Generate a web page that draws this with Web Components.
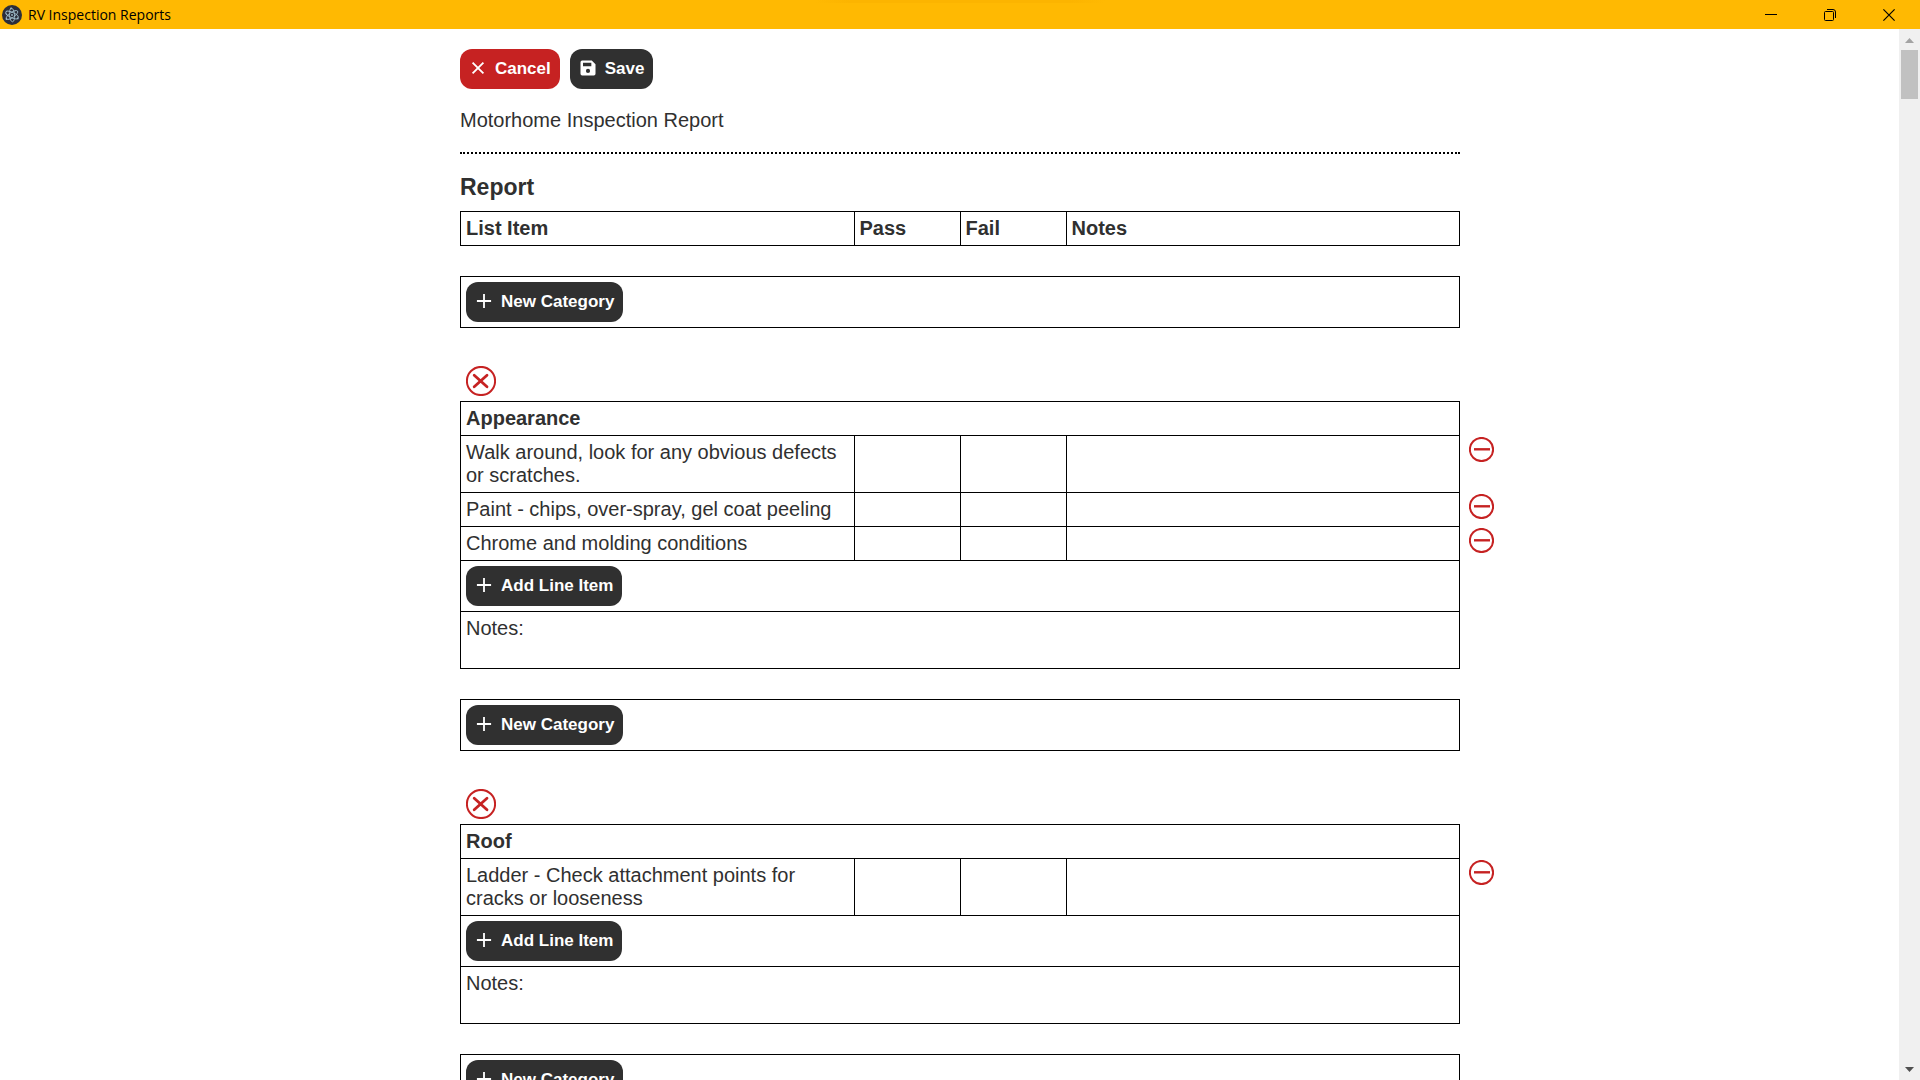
<!DOCTYPE html>
<html lang="en">
<head>
<meta charset="utf-8">
<title>RV Inspection Reports</title>
<style>
  html, body { height: 100%; margin: 0; }
  body { overflow: hidden; background: #fff; color: #303030; font: 20px/23px "Liberation Sans", Arial, sans-serif; }
</style>
</head>
<body>
<app-window>
  <title-bar slot="title">RV Inspection Reports</title-bar>
  <report-page name="Motorhome Inspection Report">
    <report-header></report-header>
    <new-category></new-category>
    <report-category name="Appearance" items="Walk around, look for any obvious defects or scratches.|Paint - chips, over-spray, gel coat peeling|Chrome and molding conditions"></report-category>
    <new-category></new-category>
    <report-category name="Roof" items="Ladder - Check attachment points for cracks or looseness"></report-category>
    <new-category></new-category>
  </report-page>
  <scroll-rail slot="rail"></scroll-rail>
</app-window>

<script>
const define = (name, render) => customElements.define(name, class extends HTMLElement {
  connectedCallback() {
    if (!this.shadowRoot) this.attachShadow({ mode: "open" }).innerHTML = render(this);
  }
});

const icons = {
  close: '<path d="M5.5 5.5l13 13M18.5 5.5l-13 13" fill="none" stroke="currentColor" stroke-width="2.2"/>',
  add: '<path d="M12 3.5v17M3.5 12h17" fill="none" stroke="currentColor" stroke-width="2.2"/>',
  save: '<path fill="currentColor" fill-rule="evenodd" d="M5 3h11.5L21 7.5V19a2 2 0 0 1-2 2H5a2 2 0 0 1-2-2V5a2 2 0 0 1 2-2zM6 5.6v4.2h10V5.6zM12 13a2.5 2.5 0 1 0 0 5 2.5 2.5 0 0 0 0-5z"/>'
};

const tableStyle = `
  table { border-collapse: collapse; table-layout: fixed; width: 100%; }
  th, td { border: 1px solid #000; padding: 5px; text-align: left; vertical-align: top; }
  .mark { width: 106px; }
`;

define("app-window", () => `
  <style>
    :host { display: grid; grid-template-rows: auto minmax(0, 1fr); height: 100vh; }
    .view { display: grid; grid-template-columns: 21px minmax(0, 1fr) 21px; min-height: 0; }
    main { grid-column: 2; min-height: 0; overflow: hidden; }
  </style>
  <slot name="title"></slot>
  <div class="view"><main><slot></slot></main><slot name="rail"></slot></div>`);

define("title-bar", () => `
  <style>
    :host { display: flex; align-items: center; height: 29px; padding: 0 2px; color: #000;
      background: linear-gradient(90deg, #ffb902, #fcb400 12%, #fcb400 88%, #ffb902) top center / 290px 3px no-repeat #ffb902;
      font: 14px/19px "Open Sans", sans-serif; }
    .logo { width: 20px; height: 20px; margin-right: 6px; }
    .name { flex: 1; }
    button { display: flex; justify-content: center; align-items: center; width: 59px; height: 29px; padding: 0; border: 0; background: none; color: inherit; }
  </style>
  <svg class="logo" viewBox="0 0 20 20" aria-hidden="true">
    <circle cx="10" cy="10" r="10" fill="#2b2e3a"/>
    <g fill="none" stroke="#9fbccb" stroke-width=".9">
      <ellipse cx="10" cy="10" rx="6.8" ry="2.6" transform="rotate(25 10 10)"/>
      <ellipse cx="10" cy="10" rx="6.8" ry="2.6" transform="rotate(85 10 10)"/>
      <ellipse cx="10" cy="10" rx="6.8" ry="2.6" transform="rotate(145 10 10)"/>
    </g>
    <g fill="#9fbccb"><circle cx="10" cy="10" r=".9"/><circle cx="4.5" cy="14" r=".9"/><circle cx="15.7" cy="13.4" r=".9"/><circle cx="9" cy="3.4" r=".9"/></g>
  </svg>
  <span class="name"><slot></slot></span>
  <button aria-label="Minimize"><svg width="12" height="12" viewBox="0 0 12 12"><path d="M0 5.5h12" stroke="#000"/></svg></button>
  <button aria-label="Restore"><svg width="12" height="12" viewBox="0 0 12 12" fill="none" stroke="#000"><rect x=".5" y="2.5" width="9" height="9" rx="1"/><path d="M3 .5h6a2.5 2.5 0 0 1 2.5 2.5v6"/></svg></button>
  <button aria-label="Close"><svg width="12" height="12" viewBox="0 0 12 12"><path d="M.4.4l11.2 11.2M11.6.4L.4 11.6" stroke="#000" stroke-width="1.2"/></svg></button>`);

define("scroll-rail", () => `
  <style>
    :host { display: flex; flex-direction: column; align-items: center; background: #f0f0f0; }
    svg { width: 21px; height: 21px; }
    .track { flex: 1; }
    .thumb { width: 17px; height: 49px; background: #c1c1c1; }
  </style>
  <svg viewBox="0 0 21 21" aria-hidden="true"><path d="M6 14l4.500-5 4.500 5z" fill="#a3a3a3"/></svg>
  <div class="track"><div class="thumb"></div></div>
  <svg viewBox="0 0 21 21" aria-hidden="true"><path d="M6 8l4.500 5 4.500-5z" fill="#505050"/></svg>`);

define("action-button", el => `
  <style>
    :host { display: block; }
    button { display: flex; align-items: center; gap: 7px; height: 40px; padding: 0 9px 0 8px; border: 0; border-radius: 12px;
      background: #303030; color: #fff; font: bold 17px/20px "Liberation Sans", Arial, sans-serif; white-space: nowrap; }
    :host([danger]) button { background: #c62222; }
    svg { width: 20px; height: 20px; margin-bottom: 2px; }
  </style>
  <button><svg viewBox="0 0 24 24" aria-hidden="true">${icons[el.getAttribute("icon")]}</svg><slot></slot></button>`);

define("remove-button", el => `
  <style>
    :host { display: block; }
    button { display: block; padding: 0; border: 0; background: none; }
    svg { display: block; fill: none; stroke: #c62222; stroke-width: 2; }
  </style>
  <button aria-label="Remove">${el.getAttribute("kind") === "category"
    ? '<svg width="30" height="30" viewBox="0 0 30 30"><circle cx="15" cy="15" r="14.1"/><path d="M8.200 9.200l12.800 11.600M21 9.200L8.200 20.800" stroke-width="2.800" stroke-linecap="round"/></svg>'
    : '<svg width="25" height="25" viewBox="0 0 25 25"><circle cx="12.500" cy="12.500" r="11.600"/><path d="M5 12.300h16" stroke-width="2.400"/></svg>'}</button>`);

define("report-page", el => `
  <style>
    :host { display: flex; flex-direction: column; width: 100%; max-width: 1000px; margin: 0 auto; padding-top: 20px; }
    .actions { display: flex; gap: 10px; }
    p { margin: 20px 0; }
    hr { width: 100%; margin: 0 0 20px; border: 0; border-top: 2px dotted #000; }
    h2 { margin: 0 0 10px; font-size: 23px; line-height: 27px; }
    .sections { display: flex; flex-direction: column; gap: 30px; }
  </style>
  <div class="actions">
    <action-button icon="close" danger>Cancel</action-button>
    <action-button icon="save">Save</action-button>
  </div>
  <p>${el.getAttribute("name")}</p>
  <hr>
  <h2>Report</h2>
  <div class="sections"><slot></slot></div>`);

define("report-header", () => `
  <style>:host { display: block; } ${tableStyle}</style>
  <table>
    <colgroup><col><col class="mark"><col class="mark"><col></colgroup>
    <thead><tr><th>List Item</th><th>Pass</th><th>Fail</th><th>Notes</th></tr></thead>
  </table>`);

define("new-category", () => `
  <style>:host { display: flex; padding: 5px; border: 1px solid #000; }</style>
  <action-button icon="add">New Category</action-button>`);

define("report-category", el => `
  <style>
    :host { display: block; padding-top: 8px; }
    ${tableStyle}
    /* The last column holds the row controls and hangs outside the page measure. */
    table { width: calc(100% + 35px); }
    .side { width: 35px; }
    td.side { border: 0; padding: 1px 0 0 9px; }
    .remove { padding: 0 0 5px 6px; }
    .notes { height: 46px; }
  </style>
  <div class="remove"><remove-button kind="category"></remove-button></div>
  <table>
    <colgroup><col><col class="mark"><col class="mark"><col><col class="side"></colgroup>
    <tbody>
      <tr><th colspan="4">${el.getAttribute("name")}</th><td class="side"></td></tr>
      ${el.getAttribute("items").split("|").map(item =>
        `<tr><td>${item}</td><td></td><td></td><td></td><td class="side"><remove-button kind="item"></remove-button></td></tr>`).join("")}
      <tr><td colspan="4"><action-button icon="add">Add Line Item</action-button></td><td class="side"></td></tr>
      <tr><td colspan="4" class="notes">Notes:</td><td class="side"></td></tr>
    </tbody>
  </table>`);
</script>
</body>
</html>
